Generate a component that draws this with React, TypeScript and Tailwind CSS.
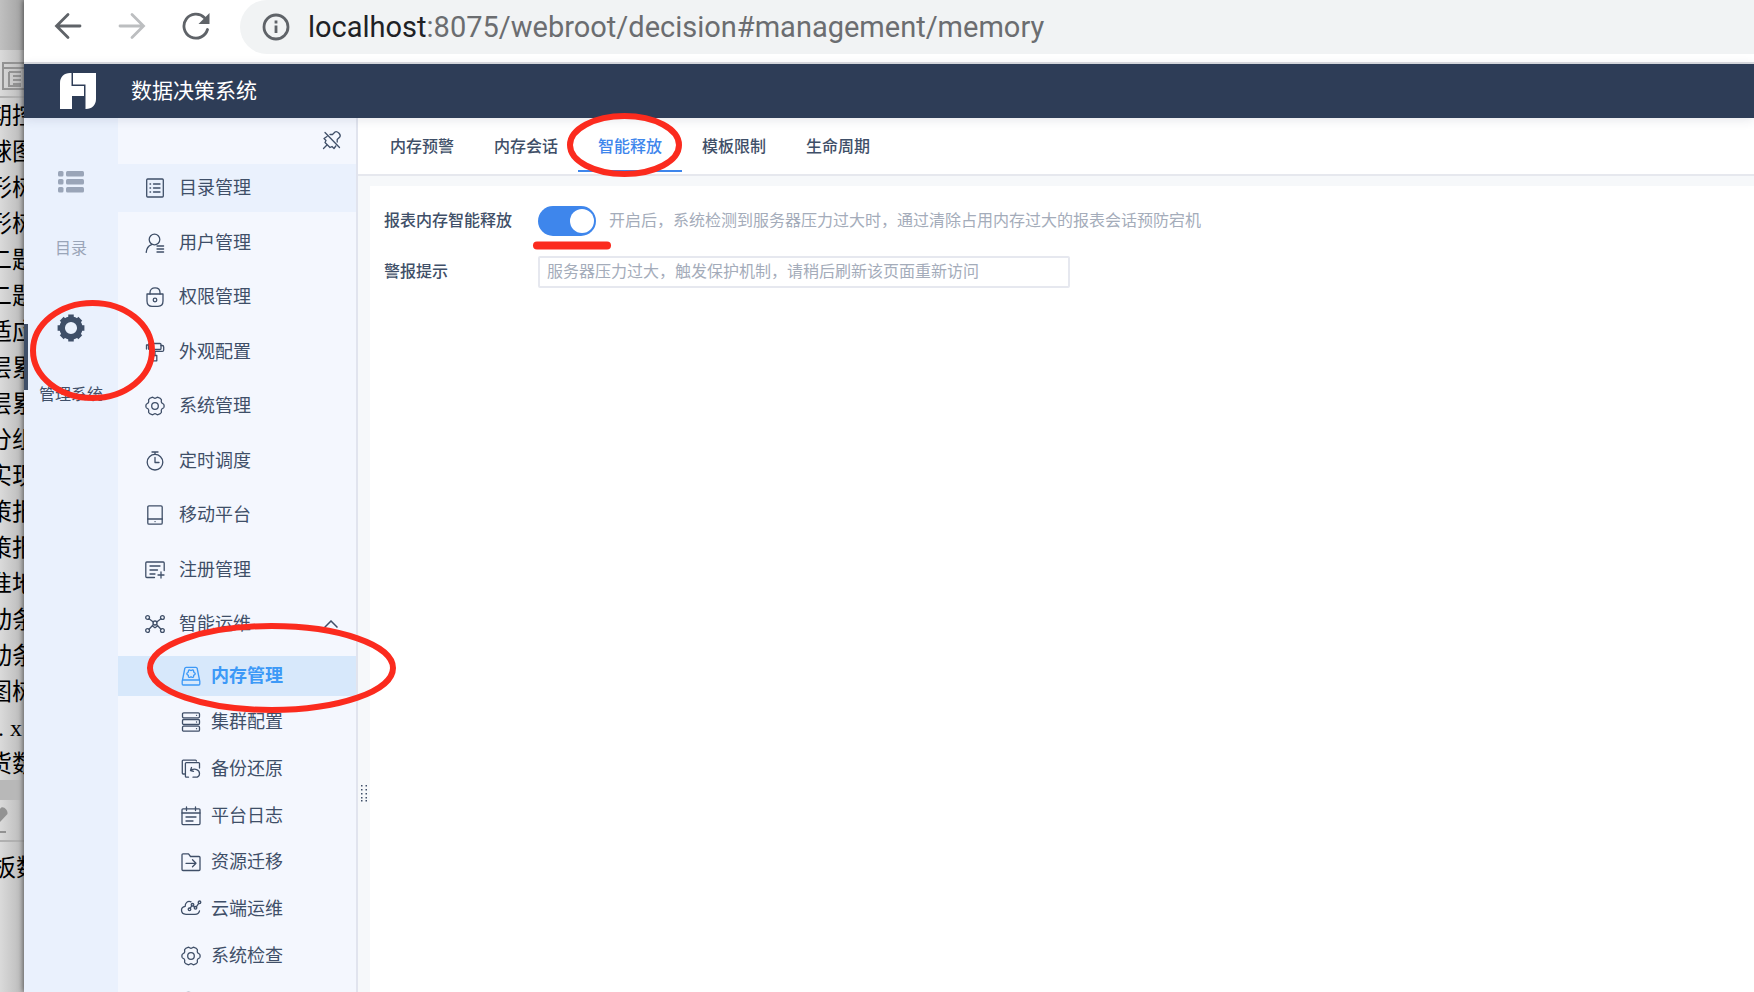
import type { ReactNode } from 'react'

const BACKDROP_LINES = [
  '期控', '球图', '形树', '形树', '二题', '二题', '适应', '层累', '层累', '分组',
  '实现', '策报', '策报', '准地', '动条', '动条', '图树', '.x', '货数',
]

function Icon({ children, className = '' }: { children: ReactNode; className?: string }) {
  return (
    <svg
      viewBox="0 0 20 20"
      className={`w-5 h-5 shrink-0 overflow-visible ${className}`}
      fill="none"
      stroke="currentColor"
      strokeWidth="1.3"
      strokeLinecap="round"
      strokeLinejoin="round"
      aria-hidden="true"
    >
      {children}
    </svg>
  )
}

// Closed outline with six soft lobes
function lobes(cx: number, cy: number, r: number, depth: number) {
  const points = Array.from({ length: 72 }, (_, i) => {
    const a = (i * Math.PI) / 36
    const d = r + depth * Math.cos(6 * a)
    return `${(cx + d * Math.cos(a)).toFixed(2)} ${(cy + d * Math.sin(a)).toFixed(2)}`
  })
  return `M${points.join('L')}Z`
}

const flowerGear = (
  <>
    <path d="M10 2.300C11.200 2.300 11.800 1 13 1.300 14.500 1.700 15.800 2.500 16.300 3.500 16.700 4.600 15.900 5.400 16.500 6.500 17 7.500 18.500 7.500 18.900 8.600 19.200 9.500 19.200 10.500 18.900 11.400 18.500 12.500 17 12.500 16.500 13.500 15.900 14.600 16.700 15.400 16.300 16.500 15.800 17.500 14.500 18.300 13 18.700 11.800 19 11.200 17.700 10 17.700 8.800 17.700 8.200 19 7 18.700 5.500 18.300 4.200 17.500 3.700 16.500 3.300 15.400 4.100 14.600 3.500 13.500 3 12.500 1.500 12.500 1.100 11.400.8 10.500.8 9.500 1.100 8.600 1.500 7.500 3 7.500 3.500 6.500 4.100 5.400 3.300 4.600 3.700 3.500 4.200 2.500 5.500 1.700 7 1.300 8.200 1 8.800 2.300 10 2.300Z" />
    <circle cx="10" cy="10" r="3.300" />
  </>
)

const menu: { label: string; icon: ReactNode }[] = [
  {
    label: '目录管理',
    icon: (
      <>
        <rect x="1.7" y="1" width="16.6" height="18" rx="1" />
        <path d="M5 6h.6M5 10h.6M5 14h.6M8.5 6H15M8.5 10H15M8.5 14H15" />
      </>
    ),
  },
  {
    label: '用户管理',
    icon: (
      <>
        <circle cx="9.5" cy="6.5" r="5.3" />
        <path d="M1.2 19.4c.3-4 2.3-6.6 5.4-7.8M12 13h6.6M12 16h6.6M12 19h6.6" />
      </>
    ),
  },
  {
    label: '权限管理',
    icon: (
      <>
        <path d="M2 7h16v7c0 3.500-2 5.300-5 5.300H7c-3 0-5-1.800-5-5.300z" />
        <path d="M5 7V5.500C5 2.700 7 .8 10 .8s5 1.900 5 4.700V7" />
        <circle cx="10" cy="13" r="1.800" />
      </>
    ),
  },
  {
    label: '外观配置',
    icon: (
      <>
        <rect x="3.500" y="1.500" width="12.500" height="6" rx="1" />
        <path d="M3.500 3H1.500v4M16 3.500h1.200c1 0 1.500.500 1.500 1.400v3c0 .900-.500 1.500-1.500 1.500H10v4M8.200 13.500h3.600v5.300H8.200z" />
      </>
    ),
  },
  { label: '系统管理', icon: flowerGear },
  {
    label: '定时调度',
    icon: (
      <>
        <circle cx="10" cy="11.200" r="7.800" />
        <path d="M7 1h6M10 1v2.400M10 6.500v5h4" />
      </>
    ),
  },
  {
    label: '移动平台',
    icon: (
      <>
        <rect x="2.800" y="0.800" width="14.400" height="18.400" rx="1.200" />
        <path d="M2.800 14h14.400M10 16.600h.1" />
      </>
    ),
  },
  {
    label: '注册管理',
    icon: <path d="M9.500 17.500H1.800c-.6 0-1-.4-1-1V3c0-.6.4-1 1-1h16.400c.6 0 1 .4 1 1v7.500M5 6h10M5 10h7.500M5 14h5M16 12v6M13 15h6" />,
  },
  {
    label: '智能运维',
    icon: (
      <>
        <circle cx="2.600" cy="3.500" r="1.900" />
        <circle cx="17.400" cy="3.500" r="1.900" />
        <circle cx="2.600" cy="16.500" r="1.900" />
        <circle cx="17.400" cy="16.500" r="1.900" />
        <circle cx="10" cy="9" r="2" />
        <path d="M4 4.800l4.300 3.200M16 4.800l-4.300 3.200M4 15.200l4.500-4.700M16 15.200l-4.500-4.700M7.500 12l2.500 1.800 2.500-1.800" />
      </>
    ),
  },
]

const subMenu: { label: string; icon: ReactNode }[] = [
  {
    label: '内存管理',
    icon: (
      <>
        <path d="M1.500 14L3.800 2.500c.1-.7.600-1.200 1.300-1.200h9.800c.7 0 1.200.5 1.300 1.200L18.500 14" />
        <rect x="1.200" y="14" width="17.600" height="5" rx="1" />
        <path d={lobes(10, 7.700, 3.700, 0.500)} />
      </>
    ),
  },
  {
    label: '集群配置',
    icon: (
      <>
        <rect x="1.500" y="0.800" width="17" height="5" rx="1.200" />
        <rect x="1.500" y="7.500" width="17" height="5" rx="1.200" />
        <rect x="1.500" y="14.200" width="17" height="5" rx="1.200" />
        <path d="M15.500 3.300h.1M15.500 10h.1M15.500 16.700h.1" />
      </>
    ),
  },
  {
    label: '备份还原',
    icon: (
      <>
        <path d="M3.500 15H2.200c-.5 0-.9-.4-.9-.9V2c0-.5.400-.9.900-.9h12.300c.5 0 .9.400.9.900" />
        <path d="M7.500 18.200H5.300c-.5 0-.9-.4-.9-.9V4.500c0-.5.400-.9.900-.9h12.300c.5 0 .9.400.9.900v4.500" />
        <path d="M10.500 8.500L9.500 11.500l3 .8M9.800 11.500c4-2.700 8.700-.8 8.700 2.900 0 2.300-1.700 3.800-4 3.800H12" />
      </>
    ),
  },
  {
    label: '平台日志',
    icon: (
      <>
        <rect x="1" y="2.800" width="18" height="15.800" rx="1" />
        <path d="M1 7h18M5.500 1v3.500M14.500 1v3.500M5 11h10M5 15h7" />
      </>
    ),
  },
  {
    label: '资源迁移',
    icon: <path d="M2 1.800h5.500l2 2.700H18c.6 0 1 .4 1 1v12c0 .6-.4 1-1 1H2c-.6 0-1-.4-1-1v-14.700c0-.6.400-1 1-1zM5 11.300h10M11.500 7.800l3.500 3.500-3.500 3.500" />,
  },
  {
    label: '云端运维',
    icon: (
      <>
        <path d="M10 2.800C6.500 1.300 4 4.300 4.200 7.300 1.500 7.800.5 9.300.5 11.100.5 13.800 2.500 15.300 5 15.300h9c2.500 0 4-1.300 4.500-3.500" />
        <circle cx="8.500" cy="10.300" r="1.300" />
        <circle cx="11.500" cy="5.800" r="1.300" />
        <circle cx="14.500" cy="8.800" r="1.300" />
        <circle cx="18.500" cy="3.300" r="1.300" />
        <path d="M9.200 9.200l1.600-2.300M12.400 6.800l1.200 1.100M15.300 7.800l2.400-3.400" />
      </>
    ),
  },
  { label: '系统检查', icon: flowerGear },
  { label: '', icon: <circle cx="7.500" cy="6.300" r="7" /> },
]

const tabs = ['内存预警', '内存会话', '智能释放', '模板限制', '生命周期']

/* Slice of the designer window that stays visible behind the browser */
function Backdrop() {
  return (
    <aside className="w-6 shrink-0 overflow-hidden flex flex-col bg-linear-to-r from-[#dadada] to-[#b9b9b9] text-black whitespace-nowrap">
      <div className="h-[50px] shrink-0 bg-linear-to-r from-[#c0c0c0] to-[#a2a2a2]" />
      <div className="h-12 shrink-0 border-b-2 border-[#b0b0b0] pt-3 pl-0.5">
        <svg className="w-7 h-7 text-[#929292]" viewBox="0 0 28 28" fill="none" stroke="currentColor" strokeWidth="2" aria-hidden="true">
          <path d="M1 1h27v26H1zM1 6h27M7 10h12M7 10v14h12M11 14h8M11 18h8M11 22h8" />
        </svg>
      </div>
      <ul className="font-['Liberation_Serif','Noto_Sans_CJK_SC',serif] text-[24px] leading-9">
        {BACKDROP_LINES.map((line, i) => (
          <li key={i} className="h-9 -ml-3">{line === '.x' ? <span className="pl-2.5 font-['Liberation_Serif',serif]">. x</span> : line}</li>
        ))}
      </ul>
      <div className="h-5 -mt-0.5 shrink-0 bg-[#b8b8b8]" />
      <div className="h-[42px] shrink-0 border-b-2 border-[#b0b0b0] pt-1">
        <svg className="w-3 h-8 text-[#929292]" viewBox="0 0 12 32" aria-hidden="true">
          <path d="M0 5c2-4 8 0 7.500 5L0 18z" fill="currentColor" />
          <path d="M0 28h6" stroke="currentColor" strokeWidth="2" />
        </svg>
      </div>
      <p className="-ml-2 pt-1.5 font-['Noto_Sans_CJK_SC',sans-serif] text-[24px] leading-9">板数</p>
    </aside>
  )
}

function AddressBar() {
  return (
    <div className="h-16 shrink-0 flex items-start bg-white border-b-2 border-[#dadce0]">
      <div className="w-[216px] shrink-0 h-[52px] pl-[30px] flex items-center gap-9 text-[#5f6368]">
        <button aria-label="Back" className="w-7 h-7">
          <svg viewBox="0 0 28 28" fill="none" stroke="currentColor" strokeWidth="2.8" strokeLinecap="round" aria-hidden="true">
            <path d="M26 14H3M14 2.500L2.500 14 14 25.500" />
          </svg>
        </button>
        <button aria-label="Forward" className="w-7 h-7 text-[#bcbec0]">
          <svg viewBox="0 0 28 28" fill="none" stroke="currentColor" strokeWidth="2.8" strokeLinecap="round" aria-hidden="true">
            <path d="M2 14h23M14 2.500L25.500 14 14 25.500" />
          </svg>
        </button>
        <button aria-label="Reload" className="w-7 h-7">
          <svg viewBox="0 0 28 28" aria-hidden="true">
            <path d="M25.500 17.500A12 12 0 1 1 22.500 5.700" fill="none" stroke="currentColor" strokeWidth="2.800" strokeLinecap="round" />
            <path d="M27.500 1v11H16.500z" fill="currentColor" />
          </svg>
        </button>
      </div>
      <div className="grow h-[54px] pb-px pl-[22px] flex items-center gap-[18px] rounded-bl-[27px] rounded-tl-[27px] bg-[#f1f3f4]">
        <svg className="w-7 h-7 shrink-0 text-[#5f6368]" viewBox="0 0 28 28" fill="none" stroke="currentColor" strokeWidth="2.800" aria-hidden="true">
          <circle cx="14" cy="14" r="12" />
          <path d="M14 12.500V20M14 7.500v3" />
        </svg>
        <p className="font-[Roboto,sans-serif] text-[29px] leading-9 text-[#202124] whitespace-nowrap">
          localhost<span className="text-[#6b6d70]">:8075/webroot/decision#management/memory</span>
        </p>
      </div>
    </div>
  )
}

function Header() {
  return (
    <header className="relative z-10 h-[54px] shrink-0 flex items-center gap-[35px] pl-9 pb-px bg-[#2e3d57] text-white shadow-[0_2px_10px_rgba(46,61,87,0.12)]">
      <svg className="w-9 h-9" viewBox="0 0 36 36" fill="currentColor" aria-hidden="true">
        <path d="M10 0h1.500v13H24V23H12v13H0V10C0 4 4 0 10 0z" />
        <path d="M13 0h23v26c0 6-4 10-10 10h-.5V11.500H13z" />
      </svg>
      <h1 className="text-[21px]">数据决策系统</h1>
    </header>
  )
}

function Rail() {
  return (
    <nav className="w-[94px] shrink-0 bg-[#eaf1fd] pt-[53px] text-base leading-6">
      <button className="w-full flex flex-col items-center text-[#9aa5b8]">
        <svg className="w-[26px] h-[22px]" viewBox="0 0 26 22" fill="currentColor" aria-hidden="true">
          <rect width="5.500" height="5.500" rx="1.500" />
          <rect x="8" width="18" height="5.500" rx="1.500" />
          <rect y="8" width="5.500" height="5.500" rx="1.500" />
          <rect x="8" y="8" width="18" height="5.500" rx="1.500" />
          <rect y="16" width="5.500" height="5.500" rx="1.500" />
          <rect x="8" y="16" width="18" height="5.500" rx="1.500" />
        </svg>
        <span className="mt-11">目录</span>
      </button>
      <button className="relative w-full mt-[53px] flex flex-col items-center text-[#3f4f68]">
        <span className="absolute left-0 top-2.5 w-1 h-[66px] bg-[#3f4f68]" />
        <svg className="w-7 h-7" viewBox="0 0 28 28" aria-hidden="true">
          <circle cx="14" cy="14" r="8.800" fill="none" stroke="currentColor" strokeWidth="5.500" />
          <path
            d="M14 .6v4M14 23.400v4M.6 14h4M23.400 14h4M4.700 4.700l3 3M20.300 20.300l3 3M4.700 23.300l3-3M20.300 7.700l3-3"
            stroke="currentColor"
            strokeWidth="5.500"
          />
        </svg>
        <span className="mt-[41px]">管理系统</span>
      </button>
    </nav>
  )
}

function Sidebar() {
  return (
    <nav className="w-60 shrink-0 bg-[#f4f7fe] border-r-2 border-[#e1e4ee] text-lg leading-7 text-[#3f4f68]">
      <div className="h-[46px] pr-3.5 pb-0.5 flex items-center justify-end">
        <button aria-label="取消固定">
          <Icon>
            <path d="M3 2.500l14.500 15M8 4.500h2.500L13 2c2-1.500 6.500 2.500 4.800 5l-2.600 2.500V12M5 6.500L2 8.500l2 2-1 2 5 5 2-1 2 2 1.800-2.500M5.200 14.800l-3.700 3.700" />
          </Icon>
        </button>
      </div>
      <ul className="mb-2">
        {menu.map((item, i) => (
          <li key={item.label} className="odd:mb-[7px] even:mb-1.5">
            <button className={`w-full h-12 pl-[27px] pr-[18px] flex items-center gap-[14px] ${i === 0 ? 'bg-[#eaf1fd]' : ''}`}>
              <Icon>{item.icon}</Icon>
              <span>{item.label}</span>
              {item.label === '智能运维' && (
                <svg className="w-3.5 h-2 ml-auto" viewBox="0 0 14 8" fill="none" stroke="currentColor" strokeWidth="1.500" aria-hidden="true">
                  <path d="M.5 7.500L7 1l6.500 6.500" />
                </svg>
              )}
            </button>
          </li>
        ))}
      </ul>
      <ul>
        {subMenu.map((item, i) => (
          <li key={item.label} className="mb-[7px] first:mb-1.5 nth-[4]:mb-1.5">
            <button className={`w-full h-10 pl-[63px] flex items-center gap-2.5 ${i === 0 ? 'bg-[#d7e8fb] text-[#3d99f7] font-bold' : ''}`}>
              <Icon>{item.icon}</Icon>
              <span>{item.label}</span>
            </button>
          </li>
        ))}
      </ul>
    </nav>
  )
}

function MemoryPanel() {
  return (
    <main className="grow min-w-0 flex flex-col bg-[#f6f8fa] text-base leading-6 text-[#3f4f68]">
      <div role="tablist" className="h-[58px] shrink-0 pl-3 flex bg-white border-b-2 border-[#e6e8ee]">
        {tabs.map((tab) => (
          <button
            key={tab}
            role="tab"
            aria-selected={tab === '智能释放'}
            className={`h-[54px] px-5 pt-1.5 border-b-2 font-medium ${tab === '智能释放' ? 'border-[#3e86ec] text-[#3e86ec]' : 'border-transparent'}`}
          >
            {tab}
          </button>
        ))}
      </div>
      <div className="grow flex">
        <div className="w-3 shrink-0 flex items-center justify-center">
          <svg className="w-1.5 h-[17px] mt-[418px]" viewBox="0 0 6 17" fill="#3f4f68" aria-hidden="true">
            {[0, 4, 8, 12, 15].map((y) => (
              <path key={y} d={`M0 ${y}h1.500v1.500H0zM4.500 ${y}h1.500v1.500H4.500z`} />
            ))}
          </svg>
        </div>
        <form className="grow mt-2.5 px-3.5 pt-5 bg-white">
          <div className="flex items-center h-[30px]">
            <label htmlFor="release" className="w-[154px] shrink-0 font-medium">报表内存智能释放</label>
            <input
              id="release"
              type="checkbox"
              role="switch"
              defaultChecked
              className="appearance-none w-[58px] h-[30px] shrink-0 px-0.5 flex items-center rounded-full bg-[#b8c0cc] checked:bg-[#3e86ec] checked:justify-end before:w-6 before:h-6 before:rounded-full before:bg-white"
            />
            <span className="ml-[13px] text-[#a4acba]">开启后，系统检测到服务器压力过大时，通过清除占用内存过大的报表会话预防宕机</span>
          </div>
          <div className="mt-5 flex items-center">
            <label htmlFor="alert" className="w-[154px] shrink-0 font-medium">警报提示</label>
            <input
              id="alert"
              type="text"
              placeholder="服务器压力过大，触发保护机制，请稍后刷新该页面重新访问"
              className="w-[532px] h-8 px-[7px] rounded-xs border-2 border-[#e6e8ef] bg-white placeholder:text-[#a4acba]"
            />
          </div>
        </form>
      </div>
    </main>
  )
}

/* Hand-drawn red marks on top of the page */
function Marks() {
  return (
    <svg className="absolute left-0 top-0 z-20 w-[720px] h-[740px] pointer-events-none" viewBox="0 0 720 740" fill="none" stroke="#fb2b1e" strokeWidth="6" aria-hidden="true">
      <ellipse cx="92.500" cy="350.500" rx="59.500" ry="47.500" />
      <ellipse cx="271.500" cy="668" rx="121.500" ry="42" />
      <ellipse cx="624.500" cy="145" rx="54.500" ry="29" />
      <path d="M537 245.500H607" strokeWidth="8" strokeLinecap="round" />
    </svg>
  )
}

export default function App() {
  return (
    <div className="relative h-screen overflow-hidden flex font-['Liberation_Sans','Noto_Sans_CJK_SC',sans-serif]">
      <Backdrop />
      <div className="relative grow min-w-0 flex flex-col shadow-[-1px_0_5px_rgba(0,0,0,0.5)]">
        <AddressBar />
        <Header />
        <div className="grow min-h-0 flex">
          <Rail />
          <Sidebar />
          <MemoryPanel />
        </div>
      </div>
      <Marks />
    </div>
  )
}
